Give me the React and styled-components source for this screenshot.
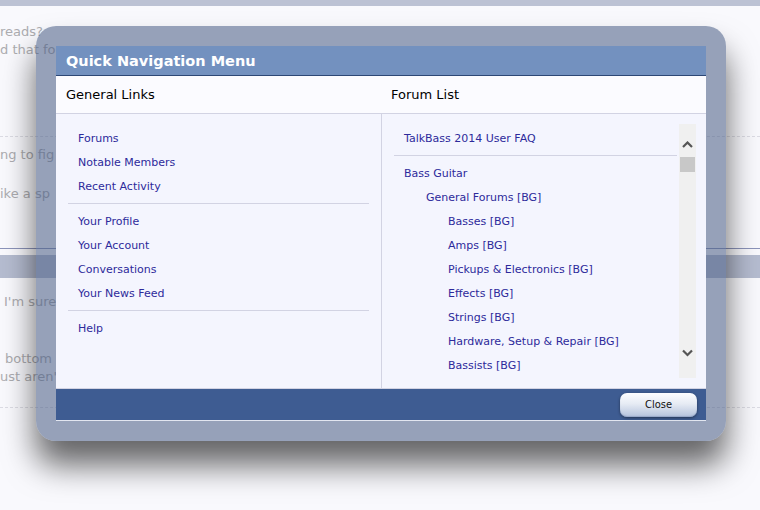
import React from 'react';
import styled, { createGlobalStyle } from 'styled-components';

const GlobalStyle = createGlobalStyle`
    html, body {
        margin: 0;
        padding: 0;
        background: #f9f9fd;
        font-family: "DejaVu Sans", Verdana, sans-serif;
        overflow: hidden;
    }
`

// ---- page behind the overlay ----

const Page = styled.div`
    width: 760px;
    height: 510px;
    display: flex;
    flex-direction: column;
`

const TopStrip = styled.div`
    height: 6px;
    background: #bcc2d4;
`

const PostText = styled.div`
    margin-top: ${props => props.top}px;
    padding-left: ${props => props.indent || 0}px;
    font-size: 13px;
    line-height: 18px;
    color: #acacb0;
    white-space: nowrap;
`

const Dashed = styled.div`
    margin-top: ${props => props.top}px;
    border-top: 1px dashed #dcdce4;
`

const Solid = styled.div`
    margin-top: ${props => props.top}px;
    border-top: 1px solid #8c94ba;
`

const SectionBar = styled.div`
    margin-top: 6px;
    height: 23px;
    background: #b5bcd0;
`

// ---- overlay ----

const Frame = styled.div`
    position: fixed;
    left: 36px;
    top: 26px;
    width: 650px;
    height: 375px;
    padding: 20px;
    border-radius: 20px;
    background: rgba(70, 89, 129, 0.55);
    box-shadow: 0 24px 32px rgba(0, 0, 0, 0.6);
`

const Dialog = styled.div`
    width: 650px;
    height: 375px;
    display: flex;
    flex-direction: column;
`

const TitleBar = styled.div`
    height: 29px;
    display: flex;
    align-items: center;
    padding-left: 10px;
    background: #7391bf;
    border-bottom: 1px solid #2d4775;
    color: #fff;
    font-weight: bold;
    font-size: 14.5px;
`

const HeadRow = styled.div`
    height: 37px;
    display: grid;
    grid-template-columns: 325px 325px;
    background: #fbfbff;
    border-bottom: 1px solid #d2d3e3;
`

const HeadCell = styled.div`
    display: flex;
    align-items: center;
    padding-left: 10px;
    font-size: 13px;
    color: #000;
`

const Body = styled.div`
    height: 274px;
    display: grid;
    grid-template-columns: 325px 1px 324px;
    background: #f4f5fe;
    border-bottom: 1px solid #d2d3e3;
`

const VRule = styled.div`
    background: #d2d3e3;
`

const LeftCol = styled.div`
    padding: 12px;
`

const RightCol = styled.div`
    padding: 10px 10px 10px 12px;
    display: flex;
    gap: 2px;
    overflow: hidden;
`

const List = styled.div`
    flex: 1;
    padding-top: 2px;
    overflow: hidden;
`

const Link = styled.div`
    height: 24px;
    display: flex;
    align-items: center;
    padding-left: ${props => 10 + (props.level || 0) * 22}px;
    font-size: 11px;
    color: #2d2a9b;
    white-space: nowrap;
`

const Divider = styled.div`
    margin: 5px 0;
    border-top: 1px solid #d2d3e3;
`

const ScrollBar = styled.div`
    width: 17px;
    background: #f0f0f0;
    display: flex;
    flex-direction: column;
    align-items: center;
`

const ArrowBox = styled.div`
    height: 17px;
    display: flex;
    align-items: center;
    justify-content: center;
    margin-top: ${props => props.top || 0}px;
`

const Thumb = styled.div`
    width: 15px;
    height: 15px;
    margin-top: 4px;
    background: #c8c8c8;
`

const Spacer = styled.div`
    flex: 1;
`

const Footer = styled.div`
    height: 31px;
    display: flex;
    align-items: center;
    justify-content: flex-end;
    padding-right: 9px;
    background: #3e5c92;
    border-bottom: 1px solid #e2e6f0;
`

const CloseButton = styled.button`
    width: 77px;
    height: 24px;
    border: none;
    border-radius: 7px;
    background: linear-gradient(to bottom, #fdfdff 0%, #e6ebf4 45%, #b4c2dc 100%);
    box-shadow: 0 1px 3px rgba(0, 0, 0, 0.45), inset 0 -1px 1px rgba(120, 140, 180, 0.5);
    font-family: "DejaVu Sans Condensed", "DejaVu Sans", sans-serif;
    font-size: 11px;
    color: #111;
    padding: 0;
`

function Chevron(props) {
    const points = props.down ? '1,1.5 5.5,6 10,1.5' : '1,6 5.5,1.5 10,6';
    return (
        <svg width="11" height="8" viewBox="0 0 11 8">
            <polyline points={points} fill="none" stroke="#555" strokeWidth="2.2" />
        </svg>
    );
}

const generalLinks = [
    ['Forums', 'Notable Members', 'Recent Activity'],
    ['Your Profile', 'Your Account', 'Conversations', 'Your News Feed'],
    ['Help'],
];

const forums = [
    ['Bass Guitar', 0],
    ['General Forums [BG]', 1],
    ['Basses [BG]', 2],
    ['Amps [BG]', 2],
    ['Pickups & Electronics [BG]', 2],
    ['Effects [BG]', 2],
    ['Strings [BG]', 2],
    ['Hardware, Setup & Repair [BG]', 2],
    ['Bassists [BG]', 2],
];

function App() {
    return (
        <>
            <GlobalStyle />
            <Page>
                <TopStrip />
                <PostText top={17}>reads?<br />d that for</PostText>
                <Dashed top={77} />
                <PostText top={9}>ng to fig</PostText>
                <PostText top={21}>ike a sp</PostText>
                <Solid top={45} />
                <SectionBar />
                <PostText top={15} indent={4}>I'm sure</PostText>
                <PostText top={39} indent={5}>bottom</PostText>
                <PostText top={0}>ust aren't</PostText>
                <Dashed top={21} />
            </Page>

            <Frame>
                <Dialog>
                    <TitleBar>Quick Navigation Menu</TitleBar>
                    <HeadRow>
                        <HeadCell>General Links</HeadCell>
                        <HeadCell>Forum List</HeadCell>
                    </HeadRow>
                    <Body>
                        <LeftCol>
                            {generalLinks.map((group, i) => (
                                <React.Fragment key={i}>
                                    {i > 0 && <Divider />}
                                    {group.map(name => <Link key={name}>{name}</Link>)}
                                </React.Fragment>
                            ))}
                        </LeftCol>
                        <VRule />
                        <RightCol>
                            <List>
                                <Link>TalkBass 2014 User FAQ</Link>
                                <Divider />
                                {forums.map(([name, level]) => (
                                    <Link key={name} level={level}>{name}</Link>
                                ))}
                            </List>
                            <ScrollBar>
                                <ArrowBox top={12}><Chevron /></ArrowBox>
                                <Thumb />
                                <Spacer />
                                <ArrowBox><Chevron down /></ArrowBox>
                                <ArrowBox />
                            </ScrollBar>
                        </RightCol>
                    </Body>
                    <Footer>
                        <CloseButton>Close</CloseButton>
                    </Footer>
                </Dialog>
            </Frame>
        </>
    );
}

export default App;
